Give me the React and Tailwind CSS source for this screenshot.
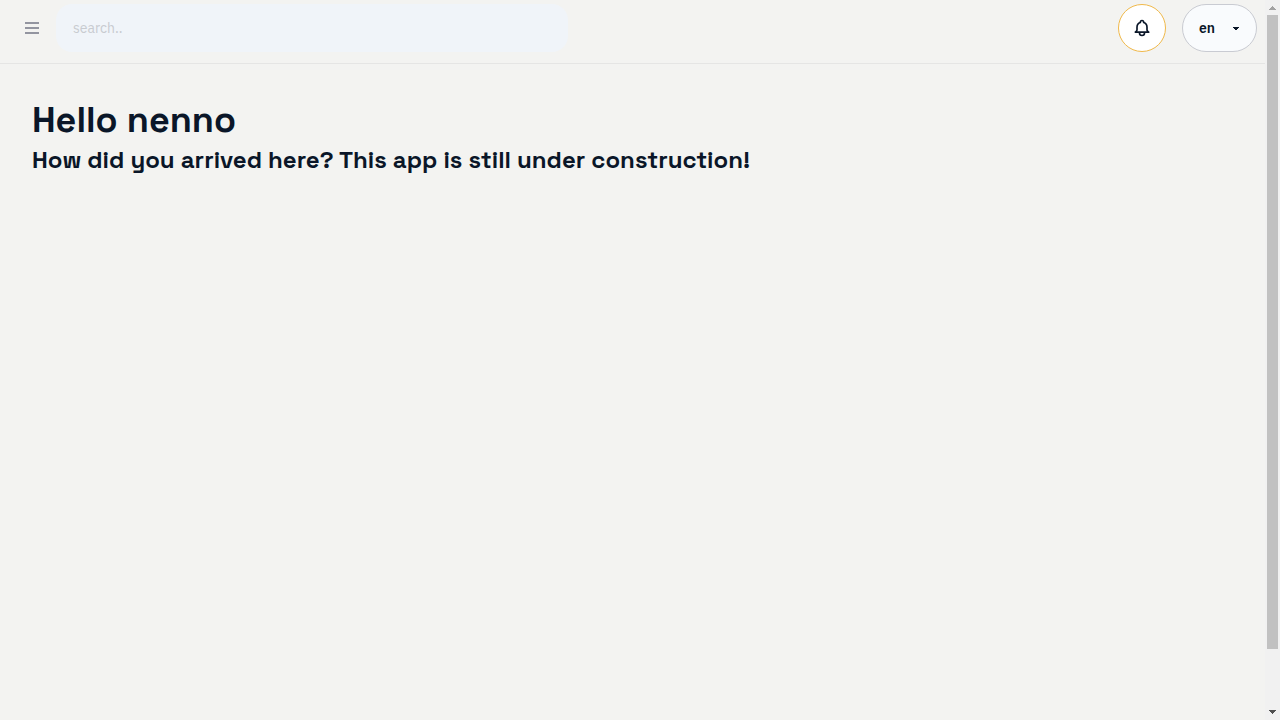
import React from "react";

function TopBar() {
  return (
    <header className="flex h-16 items-start border-b border-[#e5e5e4] pt-1 pr-2">
      <button aria-label="menu" className="flex h-12 w-8 ml-4 items-center justify-center text-[#9395a0]">
        <svg width="14" height="12" viewBox="0 0 14 12" fill="none" stroke="currentColor" strokeWidth="2" strokeLinecap="butt">
          <path d="M0 1h14M0 6h14M0 11h14" />
        </svg>
      </button>
      <input
        placeholder="search.."
        className="ml-2 h-12 w-[512px] rounded-[16px] bg-[#f0f4f9] px-[17px] font-['IBM_Plex_Sans','Roboto',sans-serif] text-[14px] text-[#0a1628] outline-none placeholder:text-[#c8cbd0] placeholder:opacity-100"
      />
      <div className="ml-auto flex gap-4">
        <button aria-label="notifications" className="flex h-12 w-12 items-center justify-center rounded-full border border-[#f0b94b] bg-white text-[#0a1628]">
          <svg className="h-5 w-5" fill="none" viewBox="0 0 24 24" stroke="currentColor" strokeWidth="2" strokeLinecap="round" strokeLinejoin="round">
            <path d="M15 17h5l-1.405-1.405A2.032 2.032 0 0118 14.158V11a6.002 6.002 0 00-4-5.659V5a2 2 0 10-4 0v.341C7.67 6.165 6 8.388 6 11v3.159c0 .538-.214 1.055-.595 1.436L4 17h5m6 0v1a3 3 0 11-6 0v-1m6 0H9" />
          </svg>
        </button>
        <button className="flex h-12 w-[75px] items-center justify-between rounded-full border border-[#c9cbd2] bg-[#f9fbfd] px-4 font-['IBM_Plex_Sans','Roboto',sans-serif] text-[14px] font-semibold text-[#0a1628]">
          <span>en</span>
          <svg width="7" height="4" viewBox="0 0 7 4" fill="currentColor" shapeRendering="crispEdges">
            <path d="M0 1h6v1H5v1H4v1H2V3H1V2H0z" />
          </svg>
        </button>
      </div>
    </header>
  );
}

function ScrollBar() {
  return (
    <aside className="flex w-[15px] shrink-0 flex-col items-center bg-[#f1f1f1]">
      <svg width="15" height="15" viewBox="0 0 15 15" fill="#a3a3a3" shapeRendering="crispEdges">
        <path d="M7 6h1v1h1v1h1v1h1v1H4V9h1V8h1V7h1z" />
      </svg>
      <div className="h-[634px] w-[11px] bg-[#c1c1c1]" />
      <svg className="mt-auto" width="15" height="15" viewBox="0 0 15 15" fill="#505050" shapeRendering="crispEdges">
        <path d="M4 5h7v1h-1v1H9v1H8v1H7V8H6V7H5V6H4z" />
      </svg>
    </aside>
  );
}

export default function App() {
  return (
    <div className="flex h-screen overflow-hidden bg-[#f3f3f1]">
      <div className="min-w-0 flex-1">
        <TopBar />
        <main className="px-8 pt-9 font-['Space_Grotesk','Inter',sans-serif] font-semibold whitespace-nowrap text-[#0a1628]">
          <h1 className="text-[36px] leading-10">Hello nenno</h1>
          <h2 className="mt-1 text-[24px] leading-8">How did you arrived here? This app is still under construction!</h2>
        </main>
      </div>
      <ScrollBar />
    </div>
  );
}
